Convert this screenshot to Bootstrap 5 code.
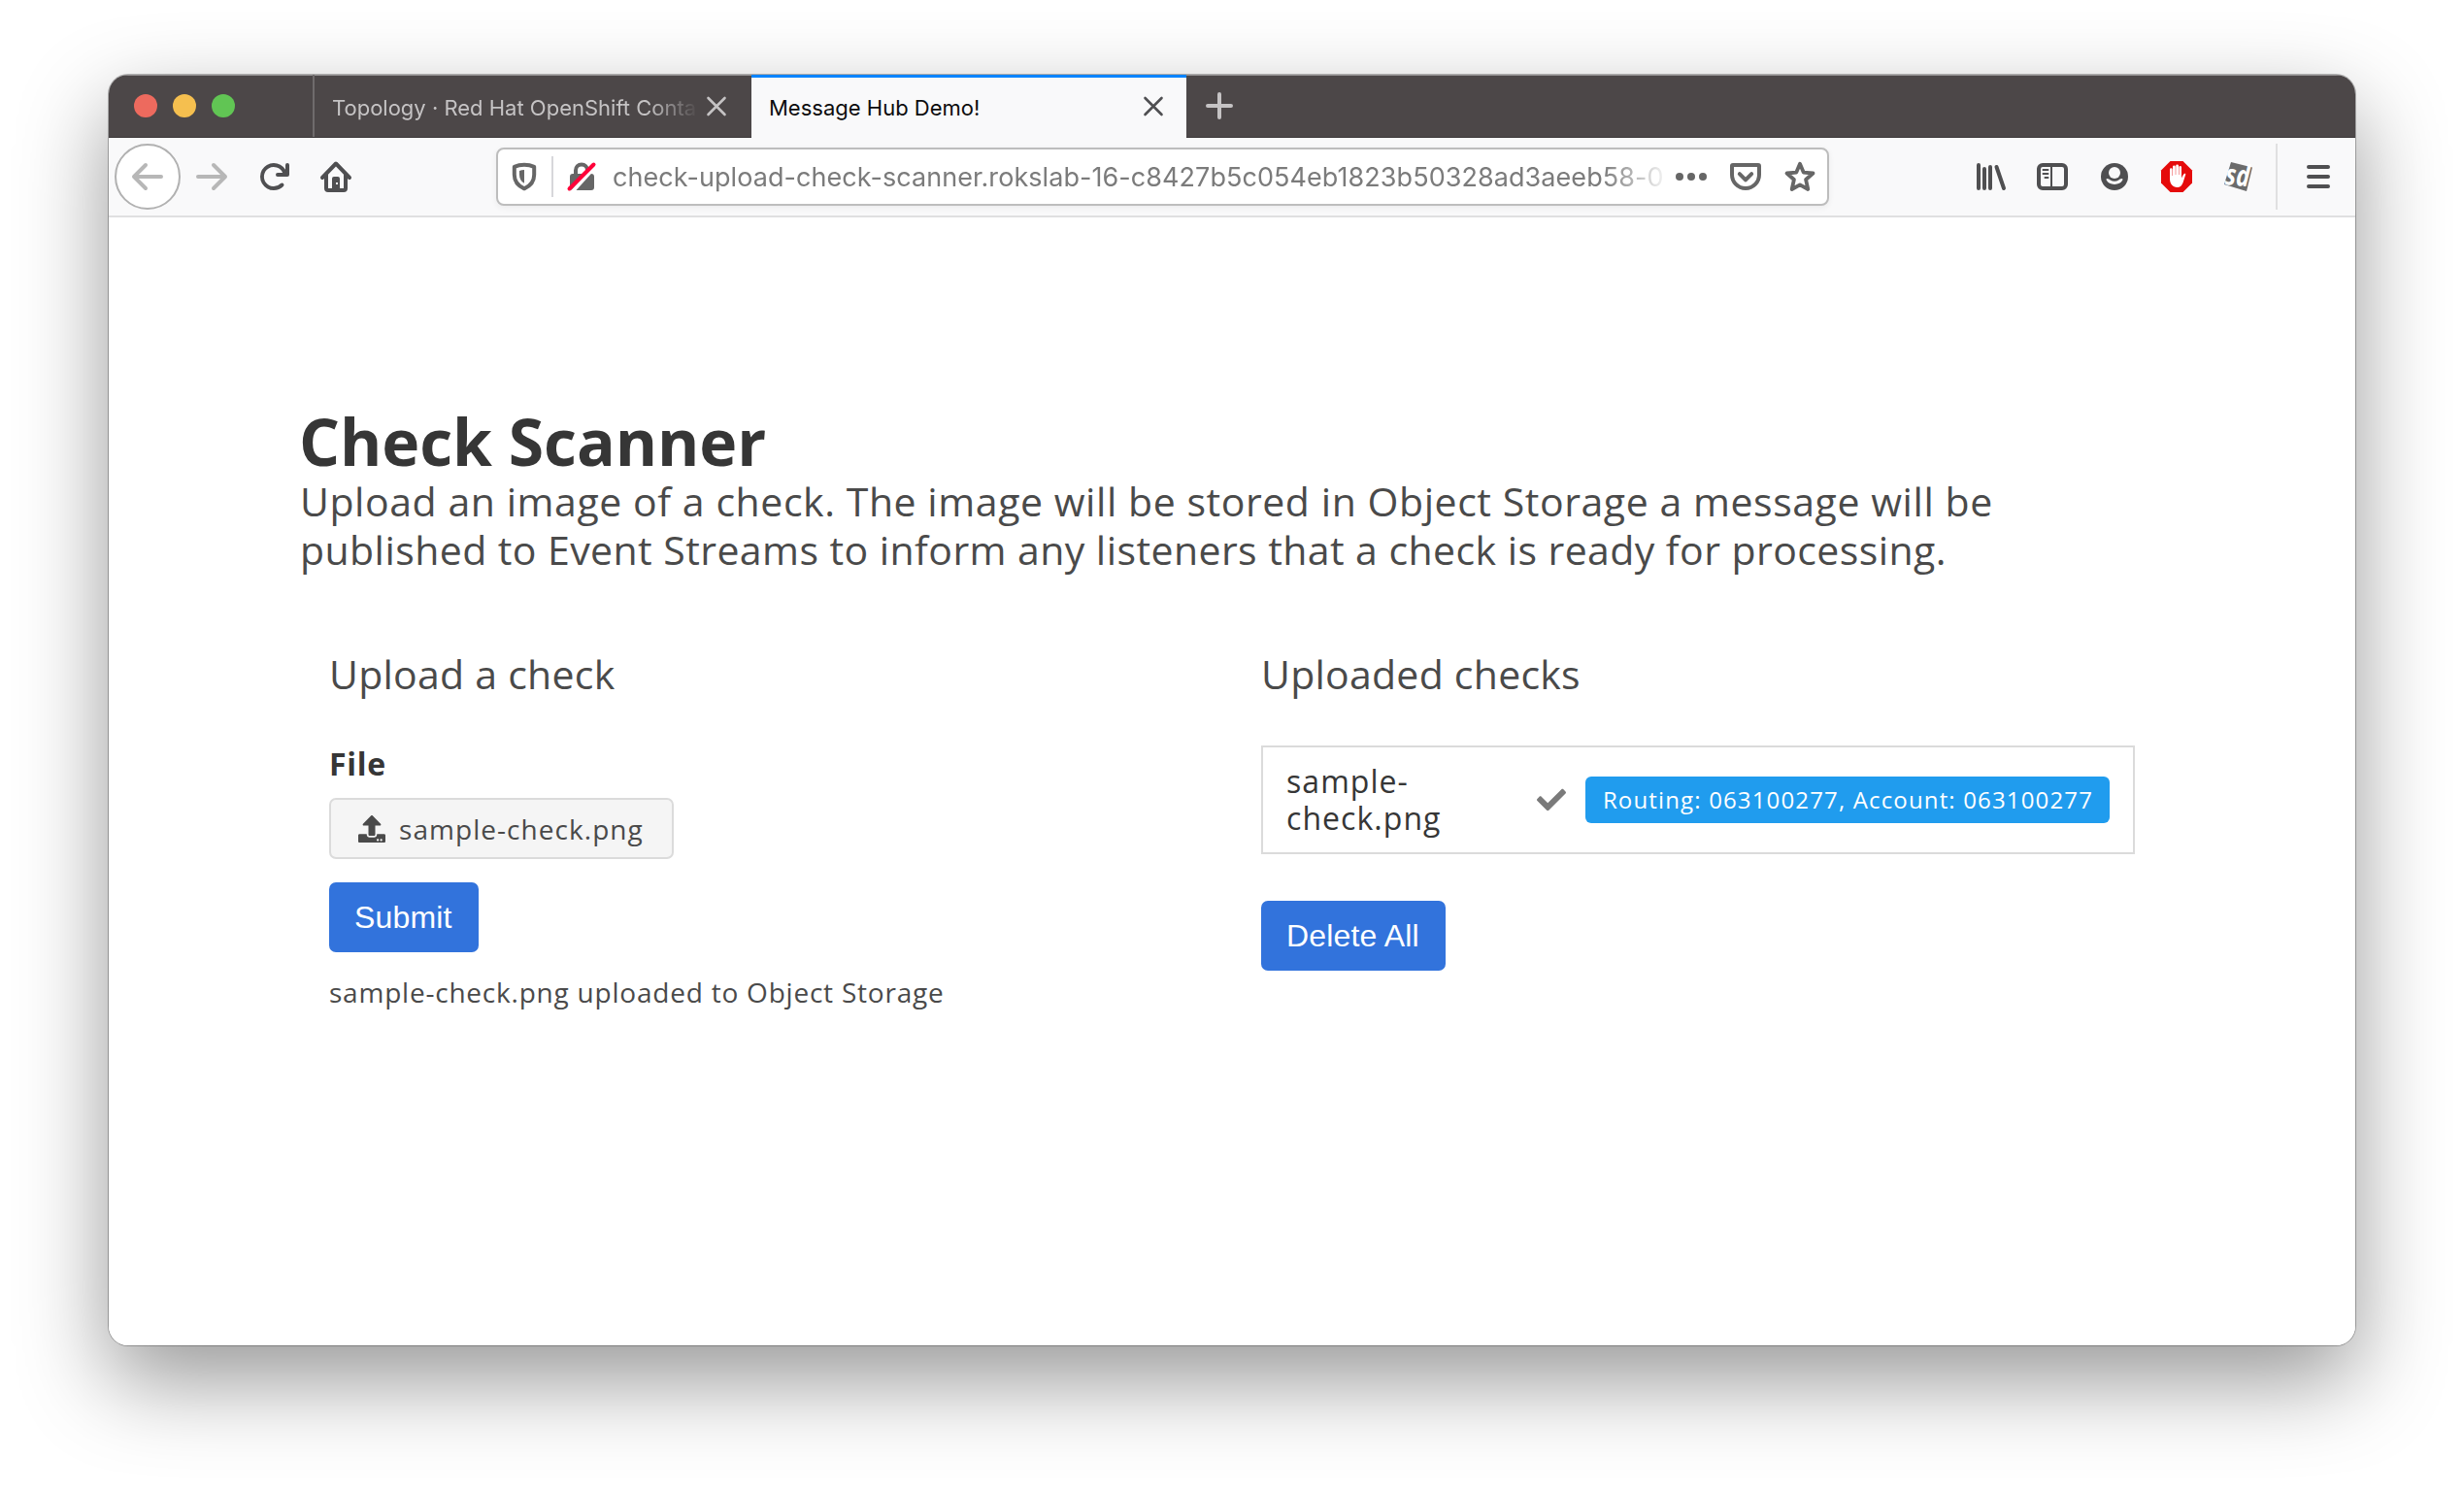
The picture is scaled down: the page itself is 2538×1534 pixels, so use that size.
<!DOCTYPE html>
<html lang="en">
<head>
<meta charset="utf-8">
<meta name="viewport" content="width=device-width, initial-scale=1">
<title>Message Hub Demo!</title>
<link href="https://cdn.jsdelivr.net/npm/bootstrap@5.3.0/dist/css/bootstrap.min.css" rel="stylesheet">
<style>
body{background:#fff;color:#4a4a4a;font-family:"Open Sans","Noto Sans",sans-serif;height:1534px;padding:77px 112px 148px;overflow:hidden}
svg{display:block;flex:none;overflow:visible}
.window{border-radius:20px;box-shadow:0 0 0 1px rgba(0,0,0,.27),0 36px 92px rgba(0,0,0,.41);width:2314px;height:1309px;overflow:hidden}
/* tab strip */
.tabstrip{height:65px;background:#4c4748;border-bottom:1px solid #3a3637;box-shadow:inset 0 1px #959293;font-family:Inter,Roboto,sans-serif;font-size:22px;line-height:36px}
.lights{width:210px;padding-left:26px;gap:16px}
.light{width:24px;height:24px;border-radius:50%}
.tab{padding-top:3px}
.tab-idle{width:450px;border-left:2px solid #6f6b6c;color:#c5c3c4;padding-left:18px}
.tab-name{width:376px;overflow:hidden;white-space:nowrap;-webkit-mask-image:linear-gradient(90deg,#000 325px,transparent 378px)}
.tab-live{width:448px;height:65px;margin-left:2px;background:#f9f9fa;border-top:3px solid #0a84ff;color:#0c0c0d;padding:0 24px 0 18px}
/* navigation bar */
.toolbar{height:82px;background:#f9f9fa;border-bottom:2px solid #e0e0e1;color:#4f4f51}
.backbtn{width:68px;height:68px;border:2px solid #b1b1b1;border-radius:50%;background:#fff;margin-left:6px}
.dimmed{color:#b7b7b7}
.urlbar{width:1373px;height:60px;border:2px solid #bdbdbd;border-radius:8px;background:#fff;box-shadow:0 2px 6px rgba(0,0,0,.06);color:#666;padding:0 12px 0 13px;margin-left:149px}
.url{width:1086px;margin-left:15px;padding-top:2px;overflow:hidden;white-space:nowrap;font:27px/36px Inter,Roboto,sans-serif;letter-spacing:.06px;color:#7b7b7b;-webkit-mask-image:linear-gradient(90deg,#000 1020px,transparent 1090px)}
.urlsep{width:2px;height:42px;background:#d7d7db}
.barsep{width:2px;height:68px;background:#e0e0e1}
/* page */
.page{background:#fff;height:1162px;padding:194px 0 0 197px}
.page-inner{width:1920px}
.headline{font-size:66px;line-height:73px;font-weight:700;color:#363636;margin:0 0 0 -1px;letter-spacing:-.1px}
.intro{font-size:41px;line-height:50px;letter-spacing:.56px;width:1790px;margin:0 0 78px}
.intro-end{letter-spacing:.43px}
.pane{padding:0 30px}
.pane-title{font-size:41px;line-height:50px;letter-spacing:.25px;margin:0;font-weight:400;color:#4a4a4a}
.file-label{font-size:32px;line-height:48px;font-weight:700;color:#363636;letter-spacing:.7px;margin:44px 0 11px}
.file-btn{width:355px;height:63px;border:2px solid #dbdbdb;border-radius:7px;background:#f5f5f5;font-size:28px;letter-spacing:1.05px;padding:0 0 0 28px;color:#4a4a4a;margin-bottom:24px}
.blue-btn{height:72px;border:0;border-radius:7px;background:#3273dc;color:#fff;font:32px/73px "Liberation Sans",Arial,sans-serif;letter-spacing:.15px;padding:0 27px 0 26px}
.status{font-size:28px;line-height:42px;letter-spacing:.78px;margin:20px 0 0 0}
.check-row{width:900px;height:112px;margin:49px 0 48px;border:2px solid #dbdbdb;border-radius:0;padding:0 24px;color:#363636}
.check-name{width:190px;font-size:32px;line-height:38px;letter-spacing:1.05px}
.result{height:48px;width:540px;border-radius:6px;background:#209cee;font-size:24px;font-weight:400;line-height:48px;letter-spacing:1.15px;padding:0 0 0 1px}
</style>
</head>
<body>
<main class="window">
  <header class="tabstrip d-flex">
    <div class="lights d-flex align-items-center">
      <span class="light" style="background:#ed6a5e"></span><span class="light" style="background:#f5bf4f"></span><span class="light" style="background:#61c554"></span>
    </div>
    <div class="tab tab-idle d-flex align-items-center">
      <span class="tab-name">Topology · Red Hat OpenShift Conta</span>
      <svg style="margin-left:10px" width="20" height="20" viewBox="0 0 20 20" fill="none" stroke="#c5c3c4" stroke-width="2.600" stroke-linecap="round"><path d="M1.500 0 18.500 17M18.500 0 1.500 17"/></svg>
    </div>
    <div class="tab-live d-flex align-items-center justify-content-between">
      <span>Message Hub Demo!</span>
      <svg width="20" height="20" viewBox="0 0 20 20" fill="none" stroke="#4f4f51" stroke-width="2.600" stroke-linecap="round"><path d="M1.500 0 18.500 17M18.500 0 1.500 17"/></svg>
    </div>
    <svg class="align-self-center" style="margin-left:20px" width="28" height="28" viewBox="0 0 28 28" stroke="#c5c3c4" stroke-width="4" stroke-linecap="round"><path d="M14 2v24M2 14h24"/></svg>
  </header>

  <nav class="toolbar d-flex align-items-center">
    <span class="backbtn dimmed d-flex align-items-center justify-content-center">
      <svg width="32" height="32" viewBox="0 0 32 32" fill="none" stroke="currentColor" stroke-width="4" stroke-linecap="round" stroke-linejoin="round"><path d="M30 16H2.500M14 4 2 16l12 12"/></svg>
    </span>
    <svg class="dimmed ms-3" width="32" height="32" viewBox="0 0 32 32" fill="none" stroke="currentColor" stroke-width="4" stroke-linecap="round" stroke-linejoin="round"><path d="M2 16h27.500M18 4l12 12-12 12"/></svg>
    <svg style="margin-left:32px" width="32" height="32" viewBox="0 0 16 16" fill="currentColor"><path d="M15 1a1 1 0 0 0-1 1v2.418A6.995 6.995 0 1 0 8 15a6.954 6.954 0 0 0 4.950-2.050 1 1 0 0 0-1.414-1.414A5.019 5.019 0 1 1 12.549 6H10a1 1 0 0 0 0 2h5a1 1 0 0 0 1-1V2a1 1 0 0 0-1-1z"/></svg>
    <svg style="margin-left:32px" width="32" height="32" viewBox="0 0 32 32"><path d="M2 17 16 2.500 30 17" fill="none" stroke="currentColor" stroke-width="4" stroke-linecap="round" stroke-linejoin="round"/><path d="M6 14v14q0 2 2 2h16q2 0 2-2V14" fill="none" stroke="currentColor" stroke-width="4"/><path d="M12 30V18q0-2 2-2h4q2 0 2 2v12z" fill="currentColor"/><rect x="16" y="22" width="2" height="2" fill="#f9f9fa"/></svg>

    <div class="urlbar d-flex align-items-center">
      <svg width="28" height="32" viewBox="0 0 28 32"><path d="M14 3.800C10 3.800 6.500 4.600 3.800 5.800V14c0 7 3.800 11.500 10.200 14.300C20.400 25.500 24.200 21 24.200 14V5.800C21.500 4.600 18 3.800 14 3.800z" fill="none" stroke="currentColor" stroke-width="4" stroke-linejoin="round"/><path d="M14 9c-2 .1-3.500.4-5 .9V14c0 4 1.700 6.800 5 8.800z" fill="currentColor"/></svg>
      <span class="urlsep" style="margin:0 14px 0 14px"></span>
      <svg width="32" height="32" viewBox="0 0 32 32"><path d="M9 14V9.500a6 6 0 0 1 12 0V14" fill="none" stroke="currentColor" stroke-width="4"/><rect x="3" y="13" width="25" height="17" rx="3" fill="currentColor"/><path d="M5.500 31.500 30 4.500" stroke="#fff" stroke-width="4"/><path d="M2.500 28.500 27.500 3.500" stroke="#ff0039" stroke-width="4" stroke-linecap="round"/></svg>
      <span class="url">check-upload-check-scanner.rokslab-16-c8427b5c054eb1823b50328ad3aeeb58-0</span>
      <svg class="ms-auto" width="32" height="32" viewBox="0 0 32 32" fill="currentColor"><circle cx="4" cy="16" r="4"/><circle cx="16" cy="16" r="4"/><circle cx="28" cy="16" r="4"/></svg>
      <svg style="margin-left:24px" width="32" height="32" viewBox="0 0 16 16" fill="currentColor"><path fill-rule="evenodd" d="M8 15a8 8 0 0 1-8-8V2.500A1.500 1.500 0 0 1 1.500 1h13A1.500 1.500 0 0 1 16 2.500V7a8 8 0 0 1-8 8zM14 3H2v4a6 6 0 0 0 12 0z"/><path d="M8 10.700a1 1 0 0 1-.707-.293l-3.100-3.100a1 1 0 0 1 1.414-1.414L8 8.286l2.393-2.393a1 1 0 0 1 1.414 1.414l-3.100 3.100A1 1 0 0 1 8 10.700z"/></svg>
      <svg style="margin-left:24px" width="32" height="32" viewBox="0 0 32 32" fill="none" stroke="currentColor" stroke-width="3.800" stroke-linejoin="round"><path d="M16 2.800l3.700 8.800 9.800.9-7.400 6.500 2.200 10L16 24.400 7.700 29l2.200-10-7.400-6.500 9.800-.9z"/></svg>
    </div>

    <div class="d-flex align-items-center ms-auto" style="gap:32px">
      <svg width="32" height="32" viewBox="0 0 32 32" stroke="currentColor" stroke-width="4" stroke-linecap="round"><path d="M4 4v24M10 8v20M16 6v22M22.500 6 30 28"/></svg>
      <svg width="32" height="32" viewBox="0 0 32 32" fill="none" stroke="currentColor"><rect x="2" y="4" width="28" height="24" rx="4" stroke-width="4"/><path d="M15 5v22" stroke-width="2"/><path d="M6.500 9h5M6.500 13h5M8.500 17h3" stroke-width="2" stroke-linecap="round"/></svg>
      <svg width="32" height="32" viewBox="0 0 32 32"><circle cx="16" cy="16" r="14" fill="currentColor"/><circle cx="16" cy="12" r="6" fill="#f9f9fa"/><path d="M8.500 18c1.300 0 2.300.8 3.200 1.400 2.600 1.800 6 1.800 8.600 0 .9-.6 1.900-1.400 3.200-1.400 1 0 1.200.8.800 1.600C22.800 22.500 20 24 16 24s-6.800-1.500-8.300-4.400c-.4-.8-.2-1.600.8-1.600z" fill="#f9f9fa"/></svg>
      <svg width="32" height="32" viewBox="0 0 32 32"><path d="M9.500 0h13L32 9.500v13L22.500 32h-13L0 22.500v-13z" fill="#e50b0b"/><path d="M9 18V8.500a1.300 1.300 0 0 1 2.600 0V15h.4V5.800a1.400 1.400 0 0 1 2.800 0V14h.4V4.800a1.400 1.400 0 0 1 2.800 0V14h.4V6.300a1.300 1.300 0 0 1 2.600 0V17.500c1-2 1.800-4 2.800-4.600 1-.5 1.700.1 1.400 1.100l-2.600 8c-1 3-2.900 5-6.100 5-4.500 0-7.500-3.500-7.500-9z" fill="#fff"/></svg>
      <svg width="32" height="32" viewBox="0 0 32 32"><path d="M8 1 30 6.500 24 31 1 24z" fill="#6b6b6b"/><text transform="translate(1.500 24) rotate(5) scale(.78 1)" font-family="Open Sans" font-weight="700" font-style="italic" font-size="30" fill="#fff">sd</text></svg>
    </div>
    <span class="barsep" style="margin:0 30px 0 22px"></span>
    <svg style="margin-right:26px" width="24" height="24" viewBox="0 0 24 24" stroke="currentColor" stroke-width="4" stroke-linecap="round"><path d="M2 2h20M2 12h20M2 22h20"/></svg>
  </nav>

  <section class="page">
    <div class="page-inner">
      <h1 class="headline">Check Scanner</h1>
      <p class="intro">Upload an image of a check. The image will be stored in Object Storage a message will be <span class="intro-end">published to Event Streams to inform any listeners that a check is ready for processing.</span></p>
      <div class="row g-0">
        <div class="col-6 pane">
          <h2 class="pane-title">Upload a check</h2>
          <div class="file-label">File</div>
          <div class="file-btn d-flex align-items-center">
            <svg width="28" height="28" viewBox="0 0 512 512" fill="currentColor"><path d="M296 384h-80c-13.300 0-24-10.700-24-24V192h-87.700c-17.800 0-26.700-21.500-14.100-34.100L242.300 5.700c7.500-7.500 19.800-7.500 27.300 0l152.200 152.200c12.600 12.600 3.700 34.100-14.100 34.100H320v168c0 13.300-10.700 24-24 24zm216-8v112c0 13.300-10.700 24-24 24H24c-13.300 0-24-10.700-24-24V376c0-13.300 10.700-24 24-24h136v8c0 30.900 25.100 56 56 56h80c30.900 0 56-25.100 56-56v-8h136c13.300 0 24 10.700 24 24zm-124 88c0-11-9-20-20-20s-20 9-20 20 9 20 20 20 20-9 20-20zm64 0c0-11-9-20-20-20s-20 9-20 20 9 20 20 20 20-9 20-20z"/></svg>
            <span style="margin-left:14px">sample-check.png</span>
          </div>
          <button class="btn blue-btn d-block" type="button">Submit</button>
          <p class="status">sample-check.png uploaded to Object Storage</p>
        </div>
        <div class="col-6 pane">
          <h2 class="pane-title">Uploaded checks</h2>
          <div class="check-row card flex-row align-items-center">
            <div class="check-name">sample-<wbr>check.png</div>
            <svg class="ms-auto" width="30" height="30" viewBox="0 0 512 512" fill="#7a7a7a"><path d="M173.898 439.404l-166.400-166.400c-9.997-9.997-9.997-26.206 0-36.204l36.203-36.204c9.997-9.998 26.207-9.998 36.204 0L192 312.690 432.095 72.596c9.997-9.997 26.207-9.997 36.204 0l36.203 36.204c9.997 9.997 9.997 26.206 0 36.204l-294.400 294.401c-9.998 9.997-26.207 9.997-36.204-.001z"/></svg>
            <span class="badge result" style="margin-left:20px">Routing: 063100277, Account: 063100277</span>
          </div>
          <button class="btn blue-btn d-block" type="button">Delete All</button>
        </div>
      </div>
    </div>
  </section>
</main>
<script src="https://cdn.jsdelivr.net/npm/bootstrap@5.3.0/dist/js/bootstrap.bundle.min.js"></script>
</body>
</html>
